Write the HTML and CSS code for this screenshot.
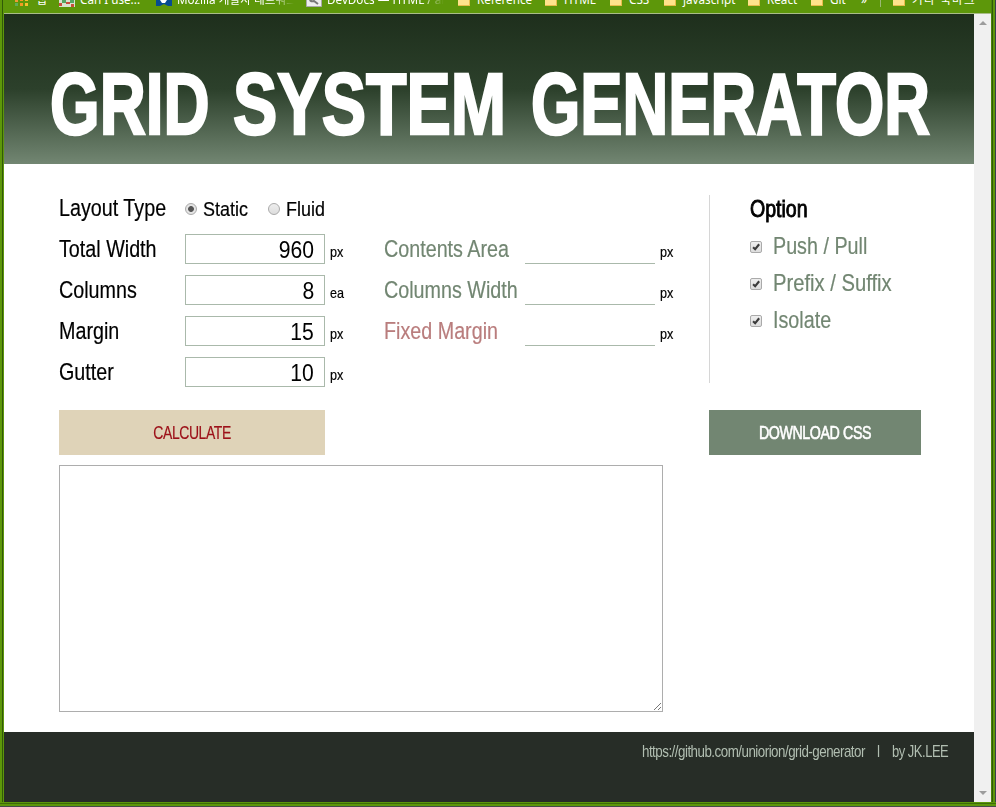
FILE: index.html
```html
<!DOCTYPE html>
<html lang="ko">
<head>
<meta charset="utf-8">
<title>Grid System Generator</title>
<link rel="stylesheet" href="styles.css">
</head>
<body>
<div class="window">
  <nav class="bookmarks">
    <span class="bm apps"><svg width="14" height="8" viewBox="0 0 14 8"><path fill="#ed9a35" d="M0 0h3v2H0z"/><path fill="#5fae55" d="M0 3h3v3H0z"/><path fill="#f39a24" d="M5 0h3v1H5zM5 3h3v3H5z"/><path fill="#f5c02c" d="M10 0h3v1h-3zM10 3h3v3h-3z"/></svg><span>앱</span></span>
    <span class="bm"><svg width="16" height="8" viewBox="0 0 16 8"><path fill="#d7e4ce" d="M0 0h16v7H0z"/><path fill="#c84e3c" d="M0 3h3v3H0zM7 2h4v2H7zM12 4h3v3h-3z"/><path fill="#54a663" d="M3 0h4v3H3zM11 0h4v3h-4z"/></svg><span>Can I use...</span></span>
    <span class="bm mozilla"><svg width="16" height="8" viewBox="0 0 16 8"><path fill="#064b91" d="M0 0h16v6h-4l-4-2-4 2H0z"/><path fill="#fff" d="M4 0h7L9 3H6z"/></svg><span>Mozilla 개발자 네트워크</span></span>
    <span class="bm devdocs"><svg width="16" height="8" viewBox="0 0 16 8"><path fill="#eee" stroke="#aaa" d="M.5-1h15v7.500H.5z"/><path fill="none" stroke="#777" stroke-width="2" d="M4-1q0 3 4 2l4 3"/></svg><span>DevDocs — HTML / arti</span></span>
    <span class="bm folder"><i></i><span>Reference</span></span>
    <span class="bm folder"><i></i><span>HTML</span></span>
    <span class="bm folder"><i></i><span>CSS</span></span>
    <span class="bm folder"><i></i><span>javascript</span></span>
    <span class="bm folder"><i></i><span>React</span></span>
    <span class="bm folder"><i></i><span>Git</span></span>
    <span class="bm more"><span>»</span></span>
    <span class="divider"></span>
    <span class="bm folder"><i></i><span>기타 북마크</span></span>
  </nav>
  <div class="viewport">
    <div class="page">
      <header class="banner"><h1><span class="word-grid">GRID</span> <span class="word-system">SYSTEM</span> <span class="word-generator">GENERATOR</span></h1></header>
      <main>
        <div class="settings">
          <div class="inputs">
            <div class="row type"><span class="label layout">Layout Type</span><span class="radio on"></span><span class="choice">Static</span><span class="radio"></span><span class="choice">Fluid</span></div>
            <div class="row"><span class="label">Total Width</span><span class="field"><span>960</span></span><span class="unit">px</span></div>
            <div class="row"><span class="label">Columns</span><span class="field"><span>8</span></span><span class="unit">ea</span></div>
            <div class="row"><span class="label">Margin</span><span class="field"><span>15</span></span><span class="unit">px</span></div>
            <div class="row"><span class="label">Gutter</span><span class="field"><span>10</span></span><span class="unit">px</span></div>
          </div>
          <div class="results">
            <div class="row"><span class="label">Contents Area</span><span class="line"></span><span class="unit">px</span></div>
            <div class="row"><span class="label">Columns Width</span><span class="line"></span><span class="unit">px</span></div>
            <div class="row fixed"><span class="label">Fixed Margin</span><span class="line"></span><span class="unit">px</span></div>
          </div>
          <div class="options">
            <h2>Option</h2>
            <div class="option"><span class="check"><svg viewBox="0 0 12 12"><path d="M2.500 6.200l2.500 2.500 4.800-6"/></svg></span><span class="name">Push / Pull</span></div>
            <div class="option"><span class="check"><svg viewBox="0 0 12 12"><path d="M2.500 6.200l2.500 2.500 4.800-6"/></svg></span><span class="name prefix">Prefix / Suffix</span></div>
            <div class="option"><span class="check"><svg viewBox="0 0 12 12"><path d="M2.500 6.200l2.500 2.500 4.800-6"/></svg></span><span class="name">Isolate</span></div>
          </div>
        </div>
        <div class="actions"><div class="button calculate"><span>CALCULATE</span></div><div class="button download"><span>DOWNLOAD CSS</span></div></div>
        <div class="output"><svg width="9" height="9" viewBox="0 0 9 9"><path d="M1 8L8 1M5 8l3-3"/></svg></div>
      </main>
      <footer><span class="url">https://github.com/uniorion/grid-generator</span><span class="sep">l</span><span class="author">by JK.LEE</span></footer>
    </div>
    <div class="scrollbar"><svg width="8" height="4" viewBox="0 0 8 4"><path d="M0 4l4-4 4 4z"/></svg><svg width="8" height="4" viewBox="0 0 8 4"><path d="M0 0l4 4 4-4z"/></svg></div>
  </div>
</div>
</body>
</html>
```
FILE: styles.css
```css
* { box-sizing: border-box; }
body {
  margin: 0;
  width: 996px;
  height: 807px;
  overflow: hidden;
  background: #5d970a;
  font-family: "Liberation Sans", sans-serif;
  color: #000;
}
.window {
  height: 807px;
  padding: 0 5px 5px 4px;
  display: flex;
  flex-direction: column;
  background: linear-gradient(#5d970a, #5d970a) 4px 0 / 987px 13px no-repeat,
    linear-gradient(#5d970a 0 1px, #3d6d08 1px 2px, #5d970a 2px 4px, #444c4a 4px) 0 802px / 996px 5px no-repeat,
    linear-gradient(90deg, #5d970a 0 2px, #315a08 2px 3px, #5d970a 3px 991px, #4b850a 991px 992px, #315a08 992px 993px, #5d970a 993px 995px, #36424a 995px);
}
.bookmarks {
  height: 14px;
  flex: none;
  overflow: hidden;
  border-bottom: 1px solid #a9bd88;
  padding-left: 11px;
  display: grid;
  grid-template-columns: 44px 97px 150px 152px 87px 65px 54px 84px 63px 50px 19px 13px 90px;
  font: 11.7px/18px "Noto Sans", "Noto Sans CJK KR", sans-serif;
  color: #fff;
}
.bm { display: flex; height: 13px; gap: 5px; white-space: nowrap; overflow: hidden; }
.bm > span { margin-top: -10px; height: 18px; }
.bm svg { flex: none; }
.apps { gap: 7px; }
.mozilla > span { width: 117px; overflow: hidden; mask-image: linear-gradient(90deg, #000 80%, transparent); }
.devdocs > span { width: 117px; overflow: hidden; mask-image: linear-gradient(90deg, #000 80%, transparent); }
.folder { gap: 7px; }
.folder i { flex: none; width: 12px; height: 6px; background: #ffe38c; border: solid #e9bd4b; border-width: 0 1px 1px 0; }
.folder:last-child { letter-spacing: 1.2px; }
.divider { width: 1px; height: 7px; background: #9bb874; }
.viewport { height: 788px; display: flex; }
.page { width: 970px; background: #fff; display: flex; flex-direction: column; }
.banner {
  height: 150px;
  background: linear-gradient(#1e2f1c, #2c402b 50%, #728672);
  overflow: hidden;
}

/* Condensed lettering: each text box keeps its place and is narrowed from its own edge. */
.label, .choice, .unit, .name, .field span, .button span, footer span, h1 span, h2 {
  display: block;
  white-space: nowrap;
  transform-origin: 0 0;
}
h1 {
  margin: 0;
  padding: 39px 0 0 45.500px;
  display: grid;
  grid-template-columns: 183px 298px 400px;
  font-size: 88px;
  line-height: 102px;
  color: #fff;
  -webkit-text-stroke: 2.500px #fff;
}
.word-grid { transform: scaleX(.725); }
.word-system { transform: scaleX(.755); }
.word-generator { transform: scaleX(.72); }
main { height: 568px; padding: 31px 53px 20px 55px; }
.settings { display: flex; height: 188px; }
.inputs, .results { width: 325px; }
.results { padding-top: 39px; color: #728672; }
.row { height: 30px; margin-bottom: 11px; display: flex; }
.row.type { margin-bottom: 9px; }
.label { flex: none; width: 126px; font-size: 24.5px; line-height: 29px; transform: scaleX(.805); }
.label, .name { -webkit-text-stroke: .2px currentColor; }
.results .label { width: 141px; }
.layout { line-height: 26px; }
.fixed .label { color: #b97d7d; }
.field { width: 140px; height: 30px; border: 1px solid #aab9ab; padding-right: 10px; display: flex; justify-content: flex-end; font-size: 24px; line-height: 30px; }
.field span { transform: scaleX(.88); transform-origin: 100% 0; }
.unit { margin-left: 5px; font-size: 15px; line-height: 36px; color: #000; transform: scaleX(.84); -webkit-text-stroke: .2px #000; }
.line { width: 130px; height: 30px; border-bottom: 1px solid #aab9ab; }
.radio { flex: none; width: 12px; height: 12px; margin-top: 8px; border: 1px solid #aaa; border-radius: 50%; background: linear-gradient(#eee, #ddd); }
.radio.on { background: radial-gradient(circle, #555 0 2.500px, #e4e4e4 3.300px); }
.choice { margin-left: 6px; width: 65px; font-size: 20.5px; line-height: 27px; transform: scaleX(.875); -webkit-text-stroke: .2px #000; }
.options { width: 212px; border-left: 1px solid #d6d6d6; padding-left: 40px; }
h2 { margin: 0; height: 32px; font-size: 24px; font-weight: 400; line-height: 28px; -webkit-text-stroke: .9px #000; transform: scaleX(.815); }
.option { height: 37px; display: flex; font-size: 24.5px; line-height: 37px; color: #728672; }
.name { transform: scaleX(.805); }
.prefix { transform: scaleX(.825); }
.check { flex: none; width: 12px; height: 12px; margin: 14px 11px 0 0; border: 1px solid #aaa; border-radius: 2px; background: linear-gradient(#eee, #ddd); display: flex; }
.check svg { width: 10px; height: 10px; overflow: visible; }
.check path { fill: none; stroke: #3b3b3b; stroke-width: 2.500; }
.actions { display: flex; justify-content: space-between; margin-top: 27px; }
.button { height: 45px; display: flex; justify-content: center; font-size: 18px; line-height: 46px; letter-spacing: -.5px; }
.button span { transform-origin: 50% 0; }
.calculate { width: 266px; background: #dfd3b8; color: #9c1018; -webkit-text-stroke: .2px #9c1018; }
.calculate span { transform: scaleX(.775); }
.download { width: 212px; background: #728672; color: #fff; -webkit-text-stroke: .6px #fff; }
.download span { transform: scaleX(.79); }
.output { width: 604px; height: 247px; margin-top: 10px; border: 1px solid #adadad; display: flex; align-items: flex-end; justify-content: flex-end; }
.output path { stroke: #555; fill: none; stroke-width: .8; }
footer { height: 70px; background: #272d27; color: #b1beb1; display: flex; padding: 10px 0 0 638px; font-size: 17px; line-height: 20px; letter-spacing: -.65px; }
.url { width: 235px; transform: scaleX(.786); }
.sep { width: 15px; transform: scaleX(.8); }
.author { transform: scaleX(.765); }
.scrollbar { width: 17px; background: #f0f0f0; display: flex; flex-direction: column; justify-content: space-between; align-items: center; padding: 7px 0; }
.scrollbar path { fill: #9c9c9c; }
```
